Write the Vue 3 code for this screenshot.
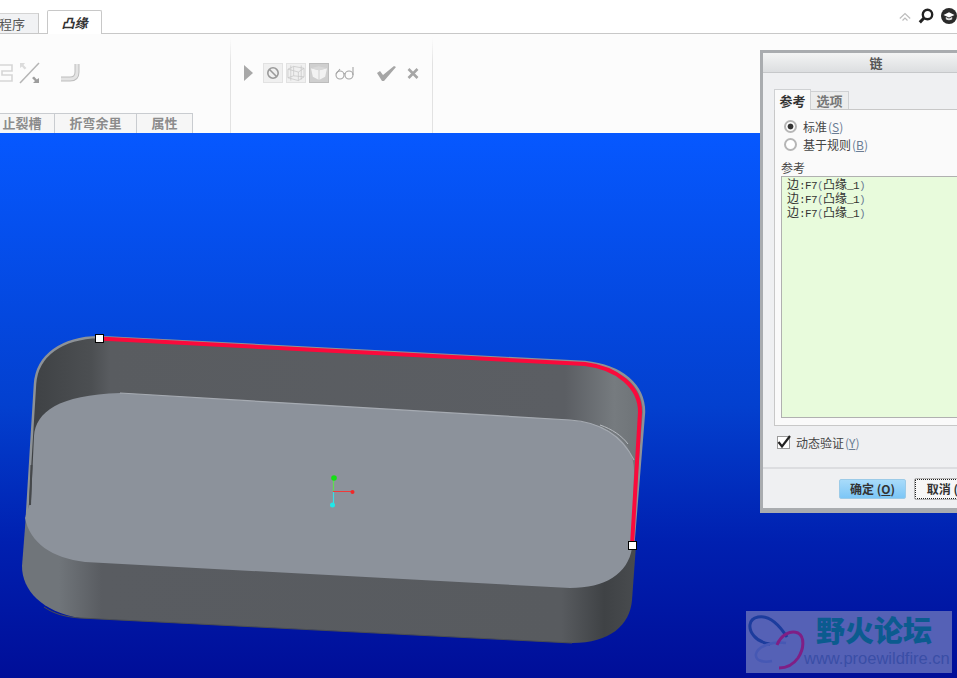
<template>
  <div class="app">
    <!-- ribbon tabs -->
    <div class="tabbar">
      <div class="tab tab-old">程序</div>
      <div class="tab tab-on">凸缘</div>
      <div class="top-icons">
        <svg width="12" height="9" viewBox="0 0 12 9"><path d="M.8 6.500 6 1.500l5.200 5M3.500 8.500 6 6l2.500 2.500" fill="none" stroke="#bdbdbd" stroke-width="1.200" /></svg>
        <svg width="16" height="16" viewBox="0 0 16 16"><circle cx="9.500" cy="6.500" r="4.700" fill="none" stroke="#222" stroke-width="2.400" /><path d="M6 10 1.800 14.400" stroke="#222" stroke-width="3" /></svg>
        <svg width="16" height="16" viewBox="0 0 16 16"><circle cx="8" cy="8" r="8" fill="#2a2a2a" /><path d="M2.500 7 8 4.200 13.500 7 8 9.600Z" fill="#fff" /><path d="M4.800 9v2.200c2 1.300 4.400 1.300 6.400 0V9L8 10.600Z" fill="#ddd" /></svg>
      </div>
    </div>

    <!-- ribbon body -->
    <div class="ribbon">
      <div class="group group-a">
        <div class="tools">
          <svg class="shape-a" width="13" height="18" viewBox="0 0 13 18"><path d="M0 1h12v6H2v4h10v6H0" fill="none" stroke="#d6d6d6" stroke-width="1.600" /></svg>
          <svg width="21" height="22" viewBox="0 0 21 22"><path d="M1 21 20 1" stroke="#b5b5b5" stroke-width="1.500" /><path d="M1 1h5L4.500 3l3 3-2 1.500-2.500-3L1 6Z" fill="#dcdcdc" /><path d="M20 21h-6l2-2-3-3 2-1.500 2.800 3L20 16Z" fill="#9d9d9d" /></svg>
          <svg class="shape-c" width="19" height="19" viewBox="0 0 19 19"><path d="M0 15h9c4 0 7-2 7-7V0" fill="none" stroke="#bdbdbd" stroke-width="5" /><path d="M0 15h9c4 0 7-2 7-7V0" fill="none" stroke="#e4e4e4" stroke-width="3" /></svg>
        </div>
        <div class="labels">
          <div class="lb lb1">止裂槽</div>
          <div class="lb lb2">折弯余里</div>
          <div class="lb lb3">属性</div>
        </div>
      </div>
      <div class="group group-b">
        <svg class="play" width="9" height="16" viewBox="0 0 9 16"><path d="M0 0 9 8 0 16Z" fill="#a8a8a8" /></svg>
        <div class="mini">
          <svg width="14" height="14" viewBox="0 0 14 14"><circle cx="7" cy="7" r="5.200" fill="none" stroke="#9a9a9a" stroke-width="1.600" /><path d="M3.500 3.500l7 7" stroke="#9a9a9a" stroke-width="1.600" /></svg>
        </div>
        <div class="mini">
          <svg width="19" height="18" viewBox="0 0 19 18"><path d="M1 5 7 2l11 2v9l-6 4-11-3ZM1 5l11 3v9M12 8l6-4M7 2v10l-6 2M7 12l11 1M4 1v16M15 1v15" fill="none" stroke="#c8c8c8" stroke-width=".8" /></svg>
        </div>
        <div class="mini mini-on">
          <svg width="19" height="16" viewBox="0 0 19 16"><path d="M1 3 9 5v10L3 12ZM10 5l8-2-2 9-6 3Z" fill="#f2f2f2" /><path d="M1 3l8-2 9 2-8 2Z" fill="#d9d9d9" /></svg>
        </div>
        <svg class="glasses" width="20" height="14" viewBox="0 0 20 14"><circle cx="5" cy="9" r="4" fill="none" stroke="#a5a5a5" stroke-width="1.100" /><circle cx="14" cy="9" r="4" fill="none" stroke="#a5a5a5" stroke-width="1.100" /><path d="M9 8c.5-.6 0-.6 1 0M1 8l4-5M18 9V1" fill="none" stroke="#a5a5a5" stroke-width="1.100" /></svg>
        <svg class="check" width="20" height="16" viewBox="0 0 20 16"><path d="M1 8 4 6l3 4L18 1l2 1L8 16h-2Z" fill="#a6a6a6" /></svg>
        <svg class="cross" width="12" height="11" viewBox="0 0 12 11"><path d="M1.500 1 10.500 10M10.500 1 1.500 10" stroke="#a6a6a6" stroke-width="2.600" /></svg>
      </div>
    </div>

    <!-- graphics window -->
    <div class="viewport">
      <svg class="model" width="957" height="545" viewBox="0 133 957 545">
        <defs>
          <linearGradient id="back" gradientUnits="userSpaceOnUse" x1="30" y1="0" x2="645" y2="0">
            <stop offset="0" stop-color="#3e4144" />
            <stop offset=".1" stop-color="#4c4f52" />
            <stop offset=".13" stop-color="#595c60" />
            <stop offset=".87" stop-color="#5b5e63" />
            <stop offset=".95" stop-color="#767b7f" />
            <stop offset="1" stop-color="#6d7276" />
          </linearGradient>
          <linearGradient id="front" gradientUnits="userSpaceOnUse" x1="22" y1="0" x2="635" y2="0">
            <stop offset="0" stop-color="#70757a" />
            <stop offset=".06" stop-color="#70757a" />
            <stop offset=".13" stop-color="#595c61" />
            <stop offset=".88" stop-color="#585b5f" />
            <stop offset=".95" stop-color="#3f4245" />
            <stop offset="1" stop-color="#484b4e" />
          </linearGradient>
        </defs>
        <!-- outer front wall -->
        <path d="M26 515 22 566C22 590 42 612 80 618L572 643C610 643 630 625 632 600L636 545 400 530Z" fill="url(#front)" />
        <path d="M44 607C54 614 66 617 80 618L572 643" fill="none" stroke="#4a4d51" stroke-width="1" />
        <!-- back wall -->
        <path d="M27 515 35 384C37 355 62 338 99 337L585 362C622 366 644 385 644 412L633 548 400 500Z" fill="url(#back)" stroke="#8d9297" stroke-width="2.500" />
        <!-- floor -->
        <path d="M31 500 34 436C36 412 58 395 120 393L570 420C612 424 635 445 634 472L632 548C628 574 605 588 570 588L85 562C52 558 30 543 25 518Z" fill="#8c929b" />
        <path d="M120 393 570 420C600 422 622 436 634 460" fill="none" stroke="#a6abb2" stroke-width="1.200" />
        <path d="M600 425C612 429 622 436 628 444" fill="none" stroke="#b8bcc1" stroke-width="1" />
        <path d="M31.500 465 30 505" stroke="#45484b" stroke-width="2" />
        <!-- selected chain -->
        <path d="M99 338.500 585 364C618 368 640 387 640 412L632 545" fill="none" stroke="#fa0a3c" stroke-width="4" />
        <rect x="95.500" y="334.500" width="8" height="8" fill="#fff" stroke="#000" />
        <rect x="628.500" y="541.500" width="8" height="8" fill="#fff" stroke="#000" />
        <!-- csys -->
        <path d="M333.500 478v14" stroke="#5fe04f" stroke-width="1.200" />
        <path d="M333.500 492v13" stroke="#38dfe8" stroke-width="1.200" />
        <path d="M333 491.500h20" stroke="#f03a3a" stroke-width="1" />
        <circle cx="334" cy="478" r="2.800" fill="#14e014" />
        <circle cx="332.500" cy="505" r="2.500" fill="#1fe8e8" />
        <circle cx="352.500" cy="492" r="2" fill="#f02828" />
      </svg>

      <!-- forum watermark -->
      <div class="mark">
        <svg class="mark-logo" width="58" height="58" viewBox="0 0 58 58">
          <path d="M39 24C30 10 20 2 10 4 0 6 0 16 6 23 10 28 16 30 22 31" fill="none" stroke="#1c3c9d" stroke-width="3" />
          <path d="M38 30C25 28 10 33 8 41 7 47 14 50 24 48" fill="none" stroke="#4658b4" stroke-width="2.500" />
          <path d="M29 32C33 22 42 17 50 20 57 24 56 36 50 45 45 52 38 55 31 55" fill="none" stroke="#7f1f85" stroke-width="3" />
        </svg>
        <div class="mark-text">
          <div class="mark-title">野火论坛</div>
          <div class="mark-url">www.proewildfire.cn</div>
        </div>
      </div>
    </div>

    <!-- chain dialog -->
    <div class="dialog">
      <div class="dlg-title">链</div>
      <div class="dlg-body">
        <div class="dlg-tabs">
          <div class="dtab dtab-on">参考</div>
          <div class="dtab">选项</div>
        </div>
        <div class="panel">
          <div class="radio-row">
            <span class="radio radio-on"></span>
            <span>标准<span class="acc">(<u>S</u>)</span></span>
          </div>
          <div class="radio-row">
            <span class="radio"></span>
            <span>基于规则<span class="acc">(<u>B</u>)</span></span>
          </div>
          <div class="list-label">参考</div>
          <div class="list">
            <div v-for="n in 3" :key="n" class="list-row">边<span class="hw">:F7</span><span class="acc-plain hw">(</span>凸缘<span class="hw">_1</span><span class="acc-plain hw">)</span></div>
          </div>
        </div>
        <div class="verify">
          <span class="checkbox">
            <svg width="14" height="14" viewBox="0 0 14 14"><path d="M1.500 7 5 11.500 13 1" fill="none" stroke="#222" stroke-width="2.200" /></svg>
          </span>
          <span>动态验证<span class="acc">(<u>Y</u>)</span></span>
        </div>
        <div class="dlg-foot">
          <div class="btn btn-ok">确定 (<u>O</u>)</div>
          <div class="btn btn-cancel">取消 (<u>C</u>)</div>
        </div>
      </div>
    </div>
  </div>
</template>

<script setup>
</script>

<style>
html, body { margin: 0; padding: 0; overflow: hidden; }
</style>

<style scoped>
.app {
  position: relative;
  width: 957px;
  height: 678px;
  overflow: hidden;
  display: flex;
  flex-direction: column;
  background: #fff;
  font-family: "Noto Sans CJK SC", "Liberation Sans", sans-serif;
  font-size: 12px;
  color: #444;
}

/* tabs */
.tabbar {
  height: 33px;
  flex: none;
  display: flex;
  align-items: flex-end;
  border-bottom: 1px solid #c8c8c8;
  background: #fff;
}
.tab { box-sizing: border-box; font-size: 13px; }
.tab-old {
  width: 39px;
  height: 20px;
  line-height: 19px;
  margin-right: 8px;
  text-indent: -1px;
  color: #555;
  background: #f1f2f4;
  border-right: 1px solid #c8c8c8;
  border-top: 1px solid #d4d4d4;
}
.tab-on {
  width: 55px;
  height: 24px;
  line-height: 24px;
  margin-bottom: -1px;
  text-align: center;
  font-style: italic;
  font-weight: 700;
  color: #333;
  background: #fff;
  border: 1px solid #c8c8c8;
  border-bottom: none;
  border-radius: 2px 2px 0 0;
}
.top-icons {
  margin-left: auto;
  display: flex;
  align-items: center;
  gap: 7px;
  height: 16px;
  margin-bottom: 9px;
}

/* ribbon */
.ribbon {
  height: 99px;
  flex: none;
  display: flex;
  background: #fcfcfc;
}
.group {
  box-sizing: border-box;
  border-right: 1px solid;
  border-image: linear-gradient(#fcfcfc 5px, #e2e2e2 30px) 1;
}
.group-a { width: 231px; display: flex; flex-direction: column; }
.tools {
  flex: 1;
  display: flex;
  align-items: flex-start;
  padding-top: 28px;
}
.shape-a { margin-right: 6px; margin-top: 2px; }
.shape-c { margin-left: 21px; margin-top: 2px; }
.labels { display: flex; height: 20px; margin-left: -10px; }
.lb {
  box-sizing: border-box;
  height: 20px;
  line-height: 18px;
  text-align: center;
  font-size: 13px;
  font-weight: 700;
  color: #8c8c8c;
  background: #f6f6f6;
  border: 1px solid #c9ccd0;
  border-bottom: none;
  border-left: none;
}
.lb1 { width: 65px; }
.lb2 { width: 82px; }
.lb3 { width: 56px; }

.group-b {
  width: 202px;
  display: flex;
  align-items: flex-start;
  padding-top: 29px;
  padding-left: 13px;
}
.play { margin-right: 10px; margin-top: 2px; }
.mini {
  box-sizing: border-box;
  width: 20px;
  height: 20px;
  margin-right: 3px;
  display: flex;
  align-items: center;
  justify-content: center;
  background: #f0f0f0;
  border: 1px solid #e2e2e2;
}
.mini-on { background: #cfcfcf; border-color: #bdbdbd; }
.glasses { margin-left: 3px; margin-top: 3px; }
.check { margin-left: 21px; margin-top: 2px; }
.cross { margin-left: 11px; margin-top: 5px; }

/* viewport */
.viewport {
  position: relative;
  flex: 1;
  background: linear-gradient(#0658ff 0%, #0340cf 50%, #0020b0 75%, #000e98 100%);
}
.model { position: absolute; left: 0; top: 0; display: block; }
.mark {
  position: absolute;
  left: 746px;
  top: 478px;
  width: 206px;
  height: 62px;
  display: flex;
  background: #5561b6;
}
.mark-logo { flex: none; margin: 2px 0 0 2px; }
.mark-text { margin-left: 1px; }
.mark-title {
  width: 130px;
  margin-left: 9px;
  font-size: 29px;
  line-height: 33px;
  margin-top: 2px;
  font-weight: 900;
  white-space: nowrap;
  color: #0b5b8f;
}
.mark-url {
  margin-left: -3px;
  margin-top: 3px;
  font-family: "Liberation Sans", sans-serif;
  font-size: 16.500px;
  line-height: 19px;
  white-space: nowrap;
  color: #3a4ea6;
}

/* dialog */
.dialog {
  position: absolute;
  left: 760px;
  top: 50px;
  width: 232px;
  height: 463px;
  box-sizing: border-box;
  border: 3px solid #a9acaf;
  border-width: 3px 3px 5px;
  display: flex;
  flex-direction: column;
  background: #eff0f2;
}
.dlg-title {
  height: 19px;
  line-height: 19px;
  flex: none;
  text-align: center;
  font-size: 13px;
  font-weight: 700;
  color: #555;
  background: linear-gradient(#f3f4f4, #dcdee0);
  border-bottom: 1px solid #c6c8ca;
}
.dlg-body { flex: 1; display: flex; flex-direction: column; padding: 16px 11px 0; min-height: 0; }
.dlg-tabs { display: flex; height: 21px; flex: none; position: relative; z-index: 1; }
.dtab {
  box-sizing: border-box;
  width: 38px;
  height: 18px;
  margin-top: 2px;
  line-height: 17px;
  text-align: center;
  font-size: 13px;
  font-weight: 700;
  color: #777;
  background: #eceded;
  border: 1px solid #cfd1d3;
  border-left: none;
  border-bottom: none;
}
.dtab-on {
  width: 37px;
  height: 21px;
  margin-top: 0;
  line-height: 21px;
  color: #333;
  background: #fafafa;
  border-left: 1px solid #cfd1d3;
}
.panel {
  box-sizing: border-box;
  height: 317px;
  flex: none;
  padding: 7px 0 0 6px;
  background: #fafafa;
  border: 1px solid #c8c8c8;
  border-right: none;
  margin-top: -1px;
}
.radio-row {
  display: flex;
  align-items: center;
  gap: 6px;
  height: 18px;
  margin-left: 3px;
  color: #444;
}
.radio {
  box-sizing: border-box;
  width: 13px;
  height: 13px;
  border-radius: 50%;
  border: 2px solid #b6b6b6;
  background: #fff;
}
.radio-on { background: radial-gradient(circle, #333 0 2.500px, #fff 3.300px); }
.list-label { height: 17px; line-height: 18px; margin-top: 6px; color: #444; }
.list {
  box-sizing: border-box;
  height: 242px;
  padding: 0 0 0 5px;
  background: #e8fbdc;
  border: 1px solid #b0b0b0;
  border-right: none;
}
.list-row { height: 14px; line-height: 14px; color: #333; white-space: nowrap; }
.hw { font-family: "Liberation Mono", monospace; font-size: 11px; letter-spacing: -.6px; }
.acc { color: #6a7c94; margin-left: 1px; }
.acc-plain { color: #6a7c94; }
.acc u { text-underline-offset: 1px; }
.verify { display: flex; align-items: center; gap: 6px; margin: 9px 0 0 3px; height: 14px; }
.checkbox {
  box-sizing: border-box;
  width: 13px;
  height: 13px;
  display: flex;
  align-items: center;
  justify-content: center;
  background: #fff;
  border: 1px solid #9a9a9a;
}
.checkbox svg { flex: none; }
.dlg-foot {
  margin: 18px -11px 0;
  padding: 10px 0 0 76px;
  border-top: 2px solid #dcdde0;
  display: flex;
  gap: 9px;
}
.btn {
  box-sizing: border-box;
  height: 20px;
  line-height: 18px;
  text-align: center;
  font-weight: 700;
  white-space: nowrap;
  color: #333;
}
.btn-ok {
  width: 67px;
  background: linear-gradient(#a8dbfa, #7cc6f6);
  border: 1px solid #9ccbe8;
  border-radius: 2px;
}
.btn-cancel {
  width: 67px;
  background: #f7f7f7;
  border: 1px dotted #222;
  outline: 1px solid #b5b5b5;
  border-radius: 1px;
}
</style>
